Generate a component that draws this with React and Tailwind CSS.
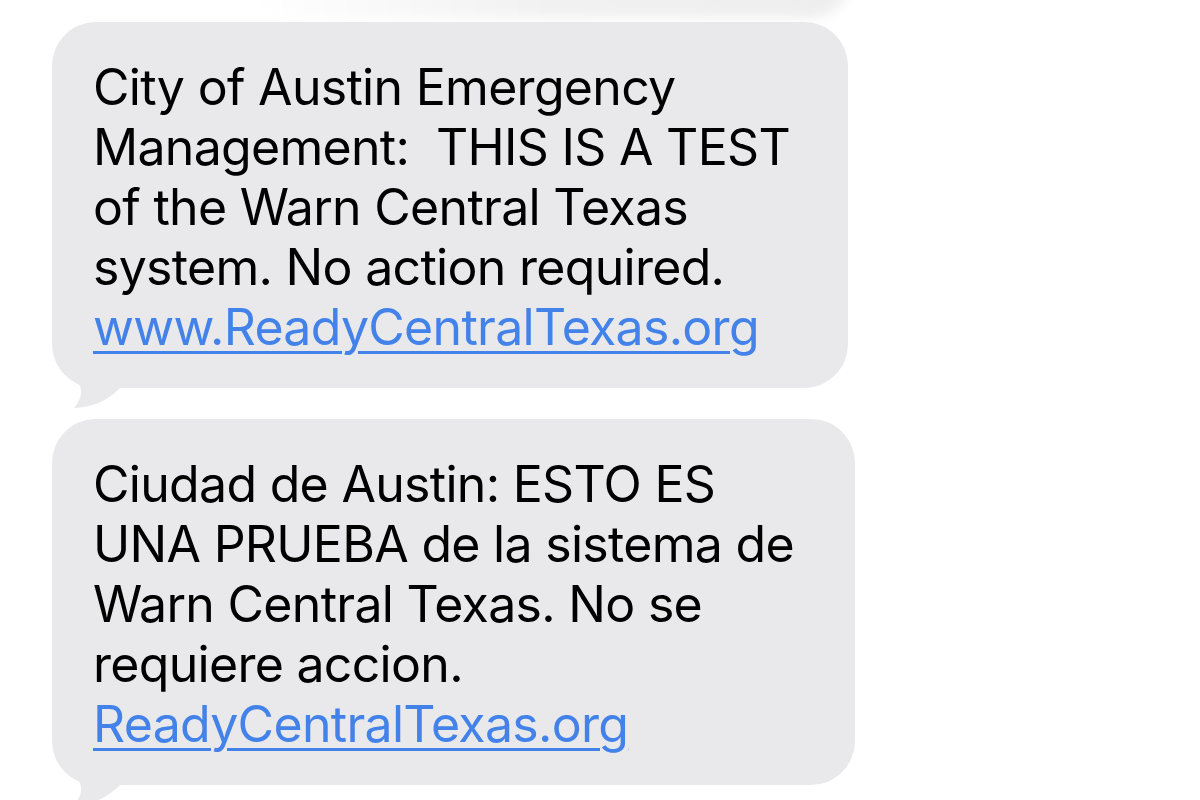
import React from 'react';

const messages = [
  {
    id: 1,
    lines: ['City of Austin Emergency', 'Management:\u00a0 THIS IS A TEST', 'of the Warn Central Texas', 'system. No action required.'],
    link: 'www.ReadyCentralTexas.org',
    width: 'w-[796px]',
  },
  {
    id: 2,
    lines: ['Ciudad de Austin: ESTO ES', 'UNA PRUEBA de la sistema de', 'Warn Central Texas. No se', 'requiere accion.'],
    link: 'ReadyCentralTexas.org',
    width: 'w-[803px]',
  },
];

const Tail = () => (
  <svg className="absolute left-[18px] -bottom-[21px]" width="70" height="30" viewBox="0 0 70 30">
    <path d="M6 0 C 14 10, 12 20, 4 29 C 26 28, 42 20, 58 0 Z" fill="#e9e9eb" />
  </svg>
);

const App = () => {
  return (
    <div className="w-[1200px] h-[800px] bg-white overflow-hidden relative" style={{ fontFamily: 'Inter, "Liberation Sans", sans-serif' }}>
      {/* faded bubble peeking in from the top */}
      <div className="absolute left-[250px] -top-[60px] w-[600px] h-[78px] rounded-[40px] bg-gradient-to-r from-white via-[#f1f1f2] to-[#eeeeef] blur-[6px]"></div>

      <div className="flex flex-col gap-[31px] pt-[22px] pl-[52px]">
        {messages.map((m) => (
          <div key={m.id} className={`relative ${m.width} bg-[#e9e9eb] rounded-[44px] pl-[41px] pr-[30px] pt-[35px] pb-[31px]`}>
            <div className="text-[50px] leading-[60px] text-black tracking-[-0.7px]">
              {m.lines.map((l, i) => (
                <div key={i}>{l}</div>
              ))}
              <div>
                <span className="text-[#4382e8] underline decoration-[3px] underline-offset-[6px]">{m.link}</span>
              </div>
            </div>
            <Tail />
          </div>
        ))}
      </div>
    </div>
  );
};

export default App;
